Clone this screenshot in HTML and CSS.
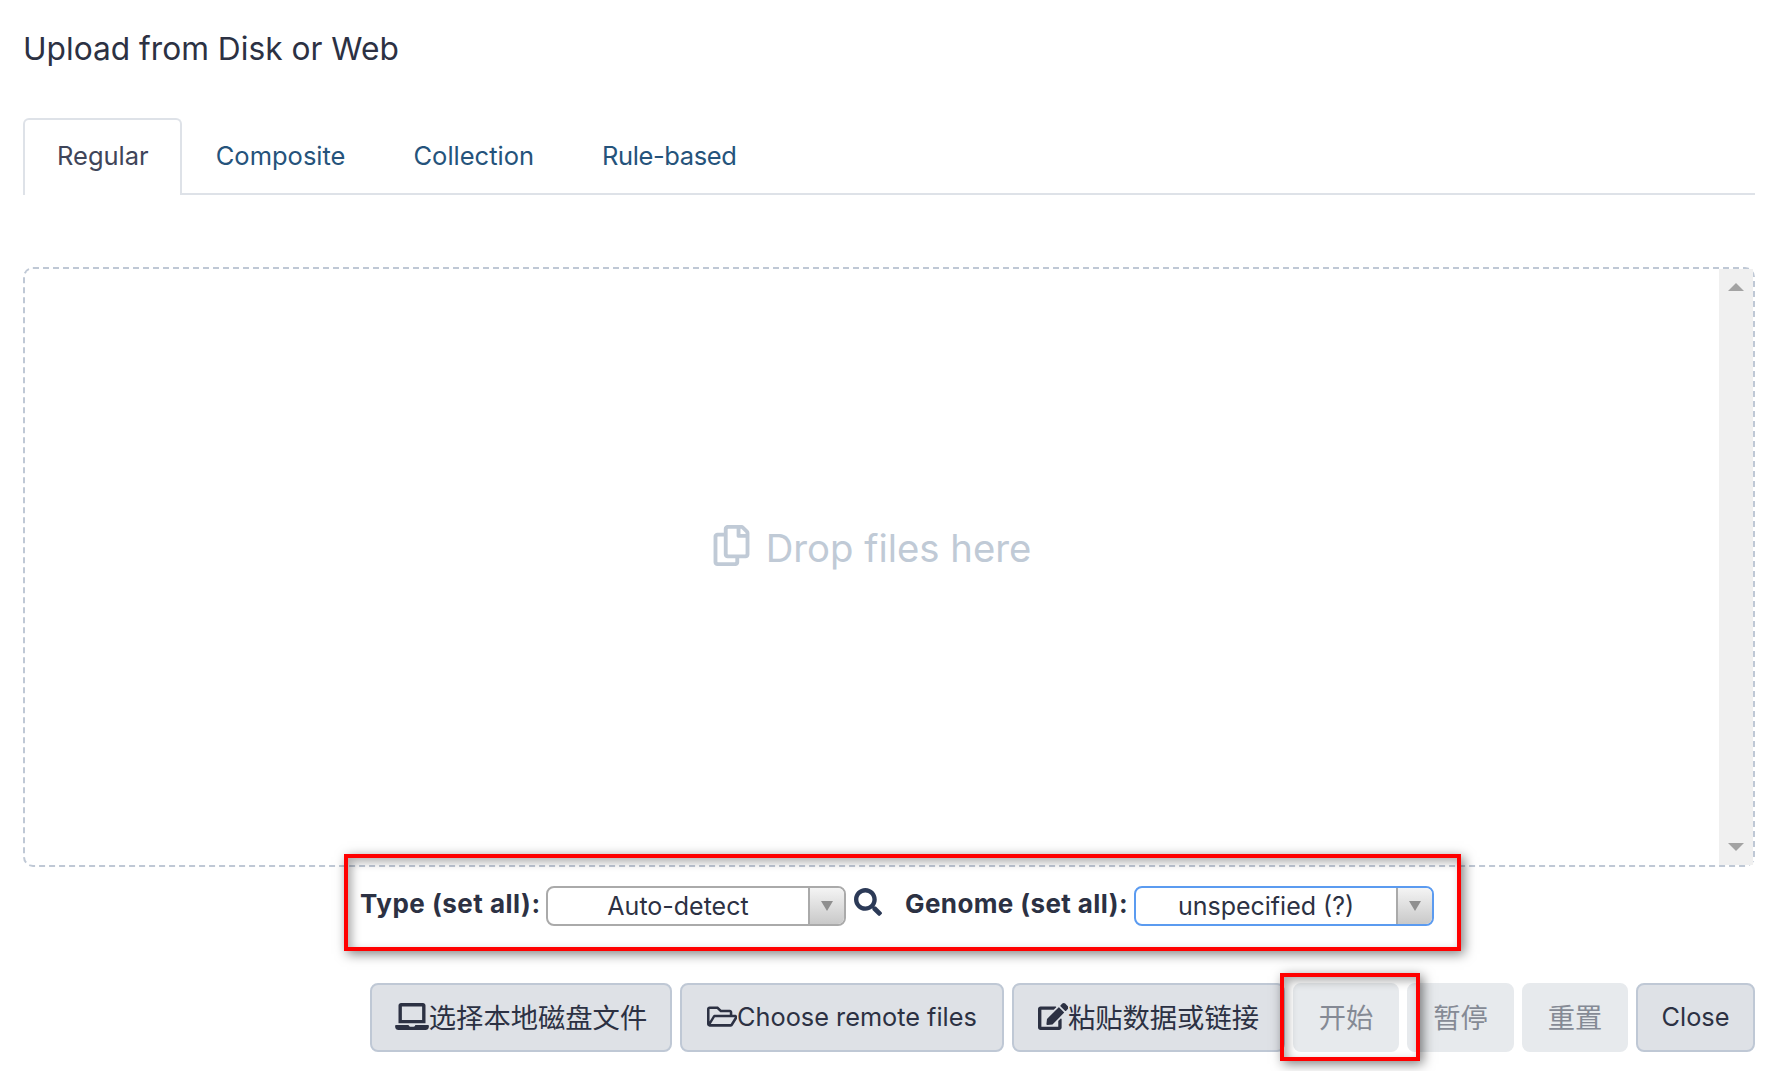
FILE: index.html
```html
<!DOCTYPE html>
<html lang="en">
<head>
<meta charset="utf-8">
<title>Upload from Disk or Web</title>
<link rel="stylesheet" href="styles.css">
</head>
<body>
<main class="dialog">
  <h1 class="title">Upload from Disk or Web</h1>
  <nav class="tabs">
    <a class="tab active">Regular</a>
    <a class="tab">Composite</a>
    <a class="tab">Collection</a>
    <a class="tab tab-rule">Rule-based</a>
  </nav>
  <section class="dropzone">
    <div class="drop-msg">
      <svg class="drop-icon" viewBox="0 0 448 512"><path d="M433.941 65.941l-51.882-51.882A48 48 0 0 0 348.118 0H176c-26.51 0-48 21.49-48 48v48H48c-26.51 0-48 21.49-48 48v320c0 26.51 21.49 48 48 48h224c26.51 0 48-21.49 48-48v-48h80c26.51 0 48-21.49 48-48V99.882a48 48 0 0 0-14.059-33.941zM266 464H54a6 6 0 0 1-6-6V150a6 6 0 0 1 6-6h74v224c0 26.51 21.49 48 48 48h96v42a6 6 0 0 1-6 6zm128-96H182a6 6 0 0 1-6-6V54a6 6 0 0 1 6-6h106v88c0 13.255 10.745 24 24 24h88v202a6 6 0 0 1-6 6zm6-256h-64V48h9.632c1.591 0 3.117.632 4.243 1.757l48.368 48.368a6 6 0 0 1 1.757 4.243V112z"/></svg>
      <span>Drop files here</span>
    </div>
    <div class="scrollbar"><i class="arrow-up"></i><i class="arrow-down"></i></div>
  </section>
  <div class="options">
    <b class="opt-label">Type (set all):</b>
    <div class="select"><span class="select-text">Auto-detect</span><span class="select-btn"><i class="caret"></i></span></div>
    <svg class="search-icon" viewBox="0 0 512 512"><path d="M505 442.7L405.3 343c-4.5-4.5-10.6-7-17-7H372c27.6-35.3 44-79.7 44-128C416 93.1 322.9 0 208 0S0 93.1 0 208s93.1 208 208 208c48.3 0 92.7-16.4 128-44v16.3c0 6.4 2.5 12.5 7 17l99.7 99.7c9.4 9.4 24.6 9.4 33.9 0l28.3-28.3c9.4-9.4 9.4-24.6.1-34zM208 336c-70.7 0-128-57.2-128-128 0-70.7 57.2-128 128-128 70.7 0 128 57.2 128 128 0 70.7-57.2 128-128 128z"/></svg>
    <b class="opt-label genome">Genome (set all):</b>
    <div class="select focus"><span class="select-text">unspecified (?)</span><span class="select-btn"><i class="caret"></i></span></div>
  </div>
  <footer class="actions">
    <button class="btn w302"><svg class="ic ic-laptop" viewBox="0 0 640 512"><path d="M624 416H381.54c-.74 19.81-14.71 32-32.74 32H288c-18.69 0-33.02-17.47-32.77-32H16c-8.8 0-16 7.2-16 16v16c0 35.2 28.8 64 64 64h512c35.2 0 64-28.8 64-64v-16c0-8.8-7.2-16-16-16zM576 48c0-26.4-21.6-48-48-48H112C85.6 0 64 21.6 64 48v336h512V48zm-64 272H128V64h384v256z"/></svg><span class="cjk">选择本地磁盘文件</span></button>
    <button class="btn w322"><svg class="ic" viewBox="0 0 576 512"><path d="M527.9 224H480v-48c0-26.5-21.5-48-48-48H272l-64-64H48C21.5 64 0 85.5 0 112v288c0 26.5 21.5 48 48 48h400c16.5 0 31.9-8.5 40.7-22.6l79.9-128c20-31.9-3-73.4-40.7-73.4zM48 118c0-3.3 2.7-6 6-6h134.1l64 64H426c3.3 0 6 2.7 6 6v42H152c-16.8 0-32.4 8.8-41.1 23.2L48 351.4zm400 282H72l77.2-128H528z"/></svg>Choose remote files</button>
    <button class="btn w272"><svg class="ic" viewBox="0 0 576 512"><path d="M402.6 83.2l90.2 90.2c3.8 3.8 3.8 10 0 13.8L274.4 405.6l-92.8 10.3c-12.4 1.4-22.9-9.1-21.5-21.5l10.3-92.8L388.8 83.2c3.8-3.8 10-3.8 13.8 0zm162-22.9l-48.8-48.8c-15.2-15.2-39.9-15.2-55.2 0l-35.4 35.4c-3.8 3.8-3.8 10 0 13.8l90.2 90.2c3.8 3.8 10 3.8 13.8 0l35.4-35.4c15.2-15.3 15.2-40 0-55.2zM384 346.2V448H64V128h229.8c3.2 0 6.2-1.3 8.5-3.5l40-40c7.6-7.6 2.2-20.5-8.5-20.5H48C21.5 64 0 85.5 0 112v352c0 26.5 21.5 48 48 48h352c26.5 0 48-21.5 48-48V306.2c0-10.7-12.9-16-20.5-8.5l-40 40c-2.2 2.3-3.5 5.3-3.5 8.5z"/></svg><span class="cjk">粘贴数据或链接</span></button>
    <button class="btn off w106"><span class="cjk">开始</span></button>
    <button class="btn off w107"><span class="cjk">暂停</span></button>
    <button class="btn off w106"><span class="cjk">重置</span></button>
    <button class="btn w119">Close</button>
  </footer>
  <div class="mark mark-options"></div>
  <div class="mark mark-start"></div>
</main>
</body>
</html>
```
FILE: styles.css
```css
* { box-sizing: border-box; }
html, body { margin: 0; height: 100%; background: #fff; }
body {
  font-family: Inter, "Noto Sans CJK SC", sans-serif;
  color: #2c3143;
  overflow: hidden;
}
.dialog { position: relative; height: 1071px; padding: 0 23px; }
.title { margin: 0; height: 118px; padding-top: 29px; font-size: 31.7px; line-height: 40px; font-weight: 400; }
.tabs { display: flex; height: 77px; border-bottom: 2px solid #dee2e8; }
.tab {
  height: 77px;
  padding: 17px 32px 0;
  font-size: 25.5px;
  line-height: 38px;
  color: #25537b;
  border: 2px solid transparent;
  border-bottom: 0;
  border-radius: 6px 6px 0 0;
}
.tab.active { color: #3f4559; border-color: #dee2e8; background: #fff; padding-right: 31px; }
.tab-rule { letter-spacing: -.4px; }
.dropzone {
  margin-top: 72px;
  height: 600px;
  border: 2px dashed #bfc8d5;
  border-radius: 10px;
  display: flex;
}
.drop-msg {
  flex: 1;
  display: flex;
  align-items: center;
  justify-content: center;
  gap: 16px;
  color: #c0cad6;
  font-size: 38.3px;
  padding-bottom: 38px;
}
.drop-icon { width: 37px; height: 41px; fill: #c0cad6; margin-top: -6px; }
.scrollbar {
  width: 34px;
  background: #f0f0f0;
  display: flex;
  flex-direction: column;
  justify-content: space-between;
  align-items: center;
  padding: 14px 0 14px;
}
.arrow-up { border: 8px solid transparent; border-top: 0; border-bottom-color: #a3a3a3; }
.arrow-down { border: 8px solid transparent; border-bottom: 0; border-top-color: #a3a3a3; }
.options {
  display: flex;
  align-items: center;
  height: 40px;
  margin-top: 19px;
  padding-left: 337px;
}
.opt-label { font-size: 26px; font-weight: 700; letter-spacing: .5px; width: 186px; white-space: nowrap; margin-top: -6px; }
.opt-label.genome { width: 229px; letter-spacing: .4px; }
.select {
  width: 300px;
  height: 40px;
  display: flex;
  border: 2px solid #aaa;
  border-radius: 8px;
  background: #fff;
  overflow: hidden;
}
.select.focus { border-color: #5b9bf0; }
.select-text { flex: 1; text-align: center; font-size: 25px; line-height: 36px; color: #2c3143; }
.select-btn {
  width: 36px;
  border-left: 2px solid #aaa;
  background: linear-gradient(#f4f4f4, #c9c9c9);
  display: flex;
  align-items: center;
  justify-content: center;
}
.caret { border: 6px solid transparent; border-bottom: 0; border-top: 10px solid #8f8f8f; }
.search-icon { width: 28px; height: 28px; fill: #2c3a57; margin: -8px 23px 0 8px; flex: none; }
.actions { display: flex; justify-content: flex-end; gap: 8px; margin-top: 57px; }
.btn {
  height: 69px;
  padding: 0 0 2px;
  display: flex;
  align-items: center;
  justify-content: center;
  font-family: inherit;
  font-size: 25.3px;
  color: #2c3143;
  background: #dee1e6;
  border: 2px solid #bfc8d5;
  border-radius: 8px;
  white-space: nowrap;
}
.btn.off { background: #e7eaed; border-color: #e7eaed; color: #858a95; }
.cjk { font-size: 27.3px; margin-top: -2px; }
.w302 { width: 302px; }
.w322 { width: 323.5px; }
.w272 { width: 273.5px; }
.w106 { width: 106px; }
.w107 { width: 107px; }
.w119 { width: 119px; }
.ic { height: 27px; width: 30.4px; fill: #2c3143; flex: none; }
.ic-laptop { width: 34px; }
.mark { position: absolute; border: 4px solid #f00; box-shadow: 3px 3px 11px rgba(0,0,0,.5), inset 4px 4px 10px rgba(0,0,0,.32); }
.mark-options { left: 344px; top: 854px; width: 1117px; height: 97px; }
.mark-start { left: 1280px; top: 973px; width: 140px; height: 88px; }
```
